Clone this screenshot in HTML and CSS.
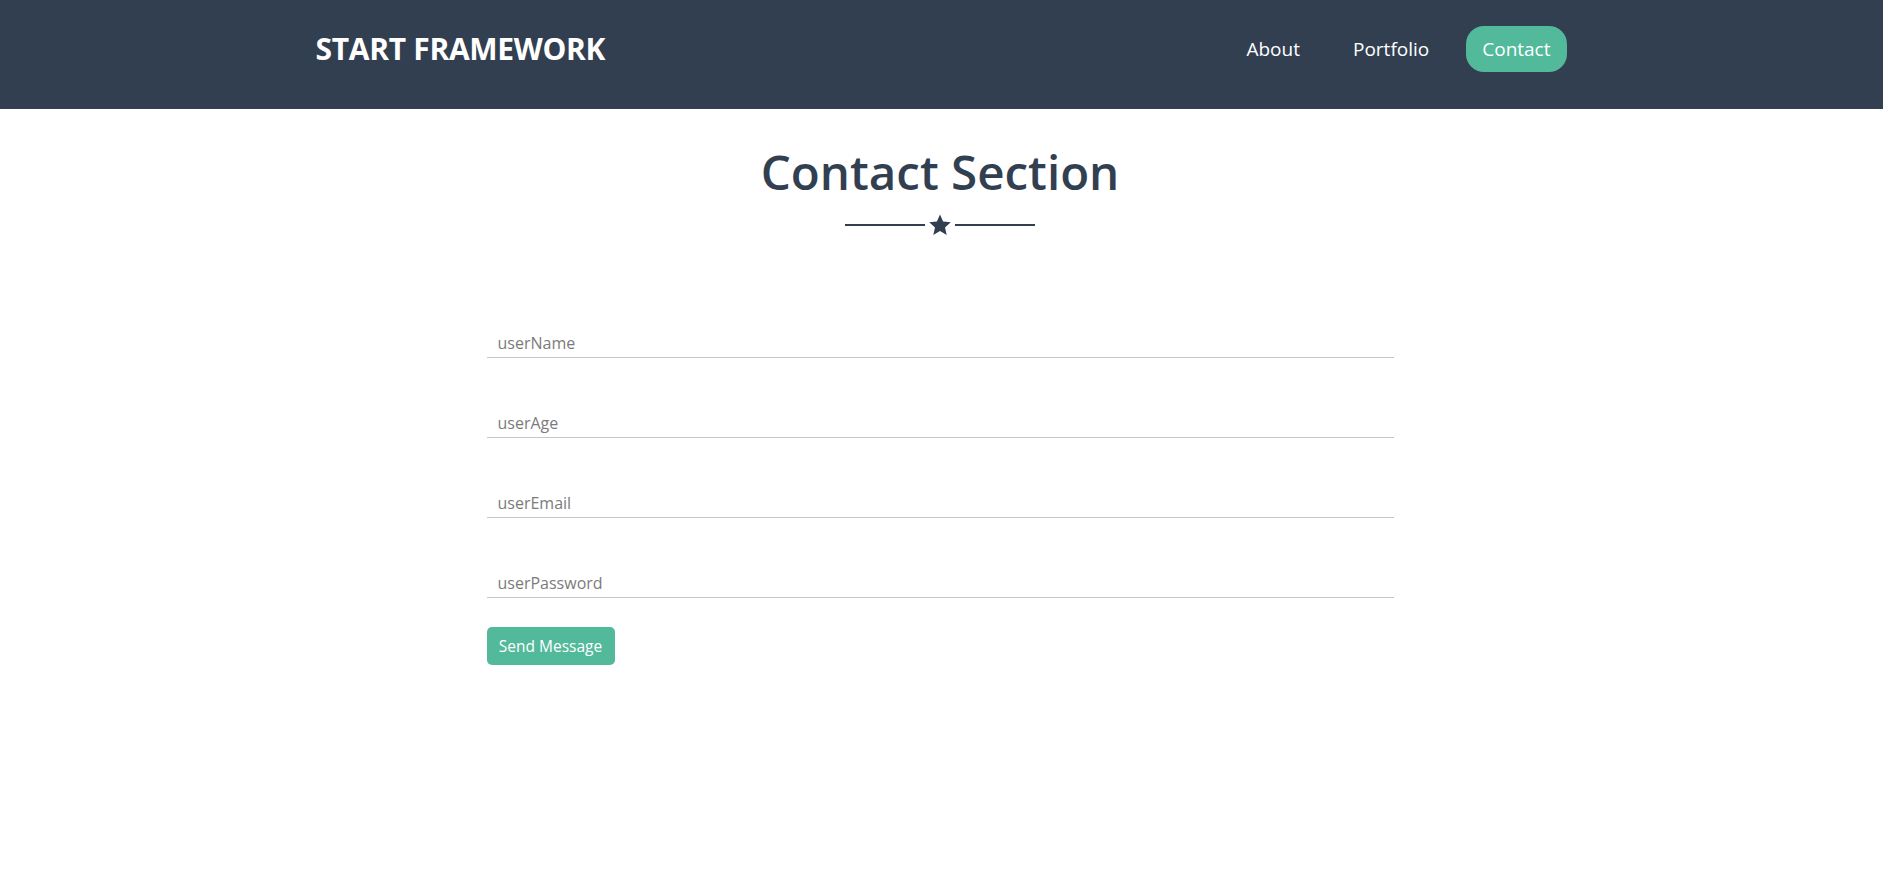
FILE: index.html
```html
<!DOCTYPE html>
<html lang="en">
<head>
<meta charset="utf-8">
<title>Start Framework</title>
<link rel="stylesheet" href="styles.css">
</head>
<body>
<header class="navbar">
  <div class="nav-inner">
    <a class="brand" href="#">START FRAMEWORK</a>
    <nav class="nav-links">
      <a class="nav-link" href="#">About</a>
      <a class="nav-link" href="#">Portfolio</a>
      <a class="nav-link active" href="#">Contact</a>
    </nav>
  </div>
</header>
<main class="contact">
  <h2 class="title">Contact Section</h2>
  <div class="divider">
    <span class="line"></span>
    <svg class="star" viewBox="0 0 24 24" width="26" height="24"><path d="M12 1.5l3.1 7.1 7.7.7-5.8 5.1 1.7 7.6L12 18l-6.7 4 1.7-7.6L1.2 9.3l7.7-.7z" fill="#323f51"/></svg>
    <span class="line"></span>
  </div>
  <form class="form">
    <input class="field" type="text" placeholder="userName">
    <input class="field" type="text" placeholder="userAge">
    <input class="field" type="email" placeholder="userEmail">
    <input class="field" type="password" placeholder="userPassword">
    <button class="send" type="button">Send Message</button>
  </form>
</main>
</body>
</html>
```
FILE: styles.css
```css
* { box-sizing: border-box; }
body {
  margin: 0;
  font-family: "Open Sans", "Noto Sans", sans-serif;
  background: #fff;
  color: #323f51;
}
.navbar {
  background: #323f51;
  height: 109px;
  padding-bottom: 12px;
}
.nav-inner {
  width: 1252px;
  margin: 0 auto;
  height: 100%;
  display: flex;
  align-items: center;
  justify-content: space-between;
}
.brand {
  color: #fff;
  text-decoration: none;
  font-weight: 700;
  font-size: 30px;
  letter-spacing: -0.3px;
}
.nav-links {
  display: flex;
  gap: 21px;
  align-items: center;
  margin-right: 1px;
}
.nav-link {
  color: #fff;
  text-decoration: none;
  font-size: 19px;
  padding: 0 16px;
  height: 46px;
  line-height: 46px;
  border-radius: 18px;
}
.nav-link.active {
  background: #52b99a;
}
.contact {
  width: 907px;
  margin-left: calc(50% - 455px);
  display: flex;
  flex-direction: column;
  align-items: center;
}
.title {
  margin: 34px 0 0;
  font-size: 47.5px;
  font-weight: 600;
  line-height: 1.2;
  color: #323f51;
}
.divider {
  display: flex;
  align-items: center;
  gap: 2px;
  margin-top: 13px;
}
.line {
  width: 80px;
  height: 2px;
  background: #323f51;
}
.star { display: block; }
.form {
  align-self: stretch;
  display: flex;
  flex-direction: column;
  align-items: flex-start;
  margin-top: 91px;
}
.field {
  width: 100%;
  height: 30px;
  border: none;
  border-bottom: 1px solid #c3c6cc;
  padding: 0 11px;
  font-family: inherit;
  font-size: 16px;
  color: #333;
  outline: none;
  margin-top: 50px;
}
.field:first-child { margin-top: 0; }
.field::placeholder { color: #7b7b7b; }
.send {
  margin-top: 29px;
  width: 128px;
  height: 38px;
  background: #52b99a;
  color: #fff;
  border: none;
  border-radius: 5px;
  font-family: inherit;
  font-size: 15.5px;
  padding: 0;
}
```
